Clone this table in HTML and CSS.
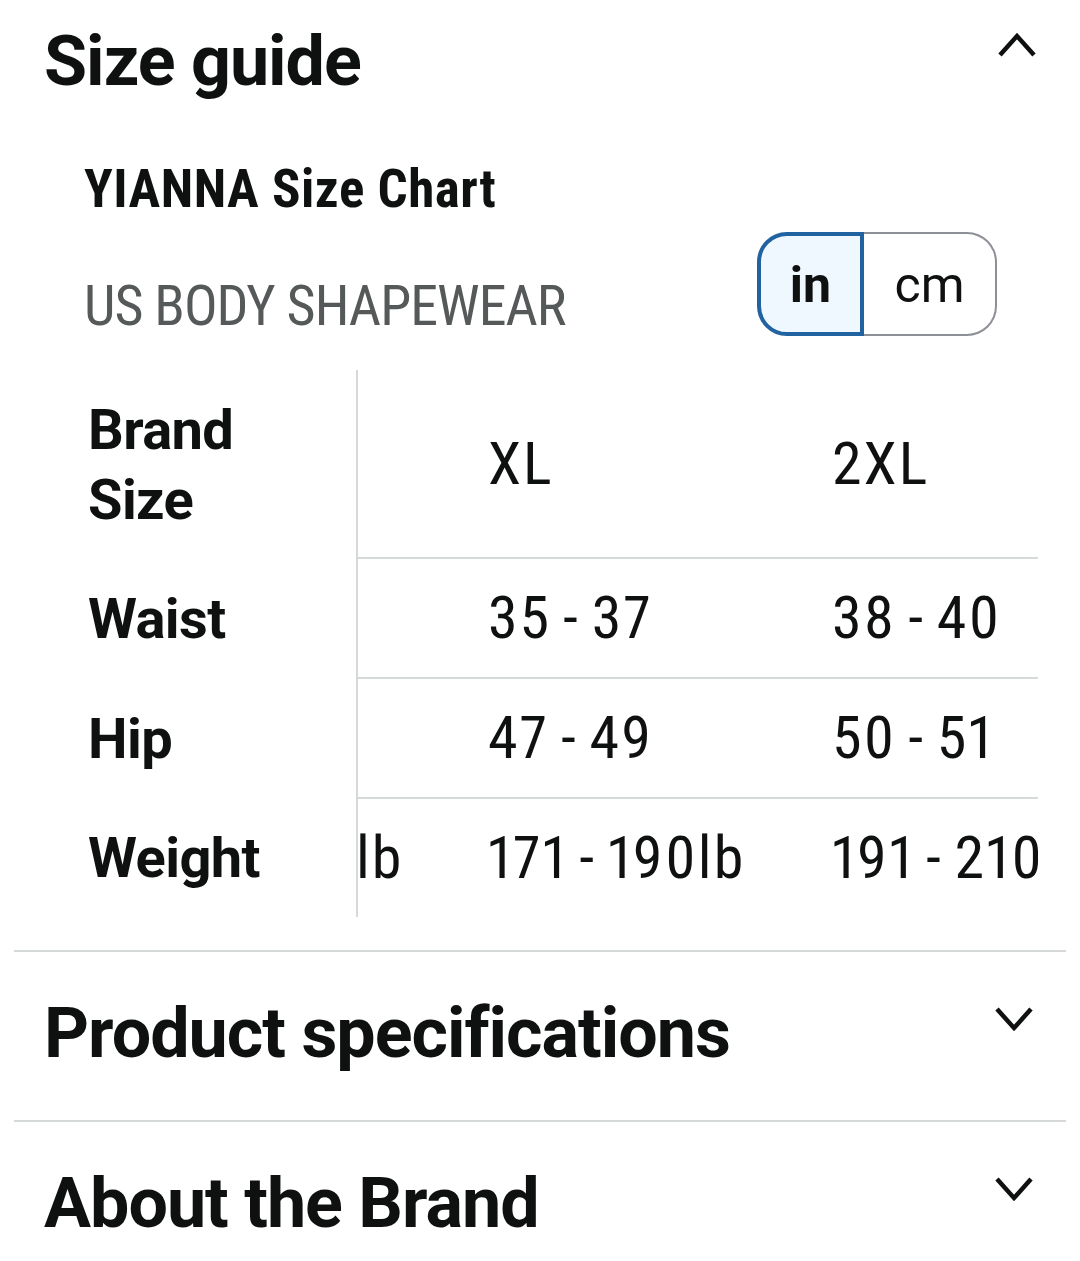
FILE: index.html
```html
<!DOCTYPE html>
<html lang="en">
<head>
<meta charset="utf-8">
<title>Size guide</title>
<link rel="stylesheet" href="styles.css">
</head>
<body>
<div class="page">
  <section class="acc acc-open">
    <div class="acc-head">
      <h2 class="acc-title">Size guide</h2>
      <svg class="chev chev-up" viewBox="0 0 40 28" width="40" height="28" aria-hidden="true"><path d="M3 24 L20 5 L37 24" /></svg>
    </div>
    <div class="chart-wrap">
      <h3 class="chart-title">YIANNA Size Chart</h3>
      <div class="chart-sub">
        <span class="region">US BODY SHAPEWEAR</span>
        <div class="toggle">
          <span class="seg seg-on">in</span>
          <span class="seg seg-off">cm</span>
        </div>
      </div>
      <div class="chart">
        <div class="labels">
          <div class="lcell lcell-head">Brand<br>Size</div>
          <div class="lcell lcell-mid">Waist</div>
          <div class="lcell lcell-mid">Hip</div>
          <div class="lcell lcell-last">Weight</div>
        </div>
        <div class="scroll">
          <div class="srow srow-head"><span class="unit"></span><span class="val">XL</span><span class="val">2XL</span></div>
          <div class="srow srow-mid"><span class="unit"></span><span class="val">35 - 37</span><span class="val">38 - 40</span></div>
          <div class="srow srow-mid"><span class="unit"></span><span class="val">47 - 49</span><span class="val">50 - 51</span></div>
          <div class="srow srow-last"><span class="unit">lb</span><span class="val">171 - 190lb</span><span class="val">191 - 210lb</span></div>
        </div>
      </div>
    </div>
  </section>
  <section class="acc">
    <div class="acc-head">
      <h2 class="acc-title">Product specifications</h2>
      <svg class="chev chev-down" viewBox="0 0 40 28" width="40" height="28" aria-hidden="true"><path d="M3 4 L20 23 L37 4" /></svg>
    </div>
  </section>
  <section class="acc acc-plain">
    <div class="acc-head">
      <h2 class="acc-title">About the Brand</h2>
      <svg class="chev chev-down" viewBox="0 0 40 28" width="40" height="28" aria-hidden="true"><path d="M3 4 L20 23 L37 4" /></svg>
    </div>
  </section>
</div>
</body>
</html>
```
FILE: styles.css
```css
* { box-sizing: border-box; }
html, body { margin: 0; padding: 0; background: #ffffff; }
body {
  font-family: Roboto, "Open Sans", sans-serif;
  color: #0f1111;
}
.page { padding: 0 14px; }

.acc {
  padding: 0 30px;
  border-bottom: 2px solid #d5d9d9;
}
.acc-plain { border-bottom: none; }
.acc-open { padding-top: 26px; padding-bottom: 33px; }
.acc:not(.acc-open) { padding-top: 46px; padding-bottom: 52px; }
.acc-plain:not(.acc-open) { padding-bottom: 20px; }

.acc-head {
  display: flex;
  justify-content: space-between;
  align-items: flex-start;
}
.acc-title {
  margin: 0;
  font-size: 70px;
  line-height: 70px;
  font-weight: 700;
  font-stretch: 88%;
  letter-spacing: -1px;
  white-space: nowrap;
}
.chev { fill: none; stroke: #0f1111; stroke-width: 4.5; stroke-linejoin: miter; flex: none; }
.chev-up { margin-top: 5px; margin-right: -1px; }
.chev-down { margin-top: 7px; margin-right: 2px; }

.chart-wrap { padding-left: 40px; margin-right: -2px; }
.chart-title {
  margin: 67px 0 0;
  font-size: 53px;
  line-height: 53px;
  font-weight: 700;
  font-stretch: 75%;
  letter-spacing: 0.5px;
  white-space: nowrap;
}
.chart-sub {
  margin-top: 16px;
  display: flex;
  justify-content: space-between;
  align-items: flex-end;
}
.region {
  font-size: 56px;
  line-height: 56px;
  font-stretch: 75%;
  letter-spacing: -1px;
  color: #565959;
  margin-bottom: 2px;
  white-space: nowrap;
}
.toggle {
  display: flex;
  height: 104px;
  margin-right: 41px;
}
.seg {
  display: flex;
  align-items: center;
  justify-content: center;
  height: 104px;
  font-size: 50px;
  font-stretch: 88%;
  color: #0f1111;
}
.seg-on {
  width: 107px;
  border: 4px solid #2162a1;
  border-radius: 30px 0 0 30px;
  background: #f0f8ff;
  font-weight: 700;
  padding-top: 2px;
}
.seg-off {
  width: 133px;
  border: 2px solid #8d9096;
  border-left: none;
  border-radius: 0 30px 30px 0;
  background: #ffffff;
  padding-top: 2px;
}

.chart {
  margin-top: 34px;
  display: flex;
}
.labels {
  width: 274px;
  flex: none;
  border-right: 2px solid #d5d9d9;
}
.lcell {
  display: flex;
  align-items: center;
  padding-left: 4px;
  font-size: 56px;
  line-height: 70px;
  font-weight: 700;
  font-stretch: 88%;
  letter-spacing: -0.6px;
}
.lcell-head { height: 189px; }
.lcell-mid { height: 120px; }
.lcell-last { height: 118px; }

.scroll {
  flex: 1;
  min-width: 0;
  overflow: hidden;
}
.srow {
  display: flex;
  align-items: center;
  font-size: 60px;
  line-height: 70px;
  font-stretch: 75%;
  font-variant-numeric: proportional-nums;
  letter-spacing: 2px;
  word-spacing: -4px;
  white-space: nowrap;
}
.srow-head { height: 189px; border-bottom: 2px solid #d5d9d9; }
.srow-mid { height: 120px; border-bottom: 2px solid #d5d9d9; }
.srow-last { height: 118px; }
.unit { width: 88px; flex: none; margin-left: -2px; }
.val { width: 344px; flex: none; padding-left: 44px; }
```
